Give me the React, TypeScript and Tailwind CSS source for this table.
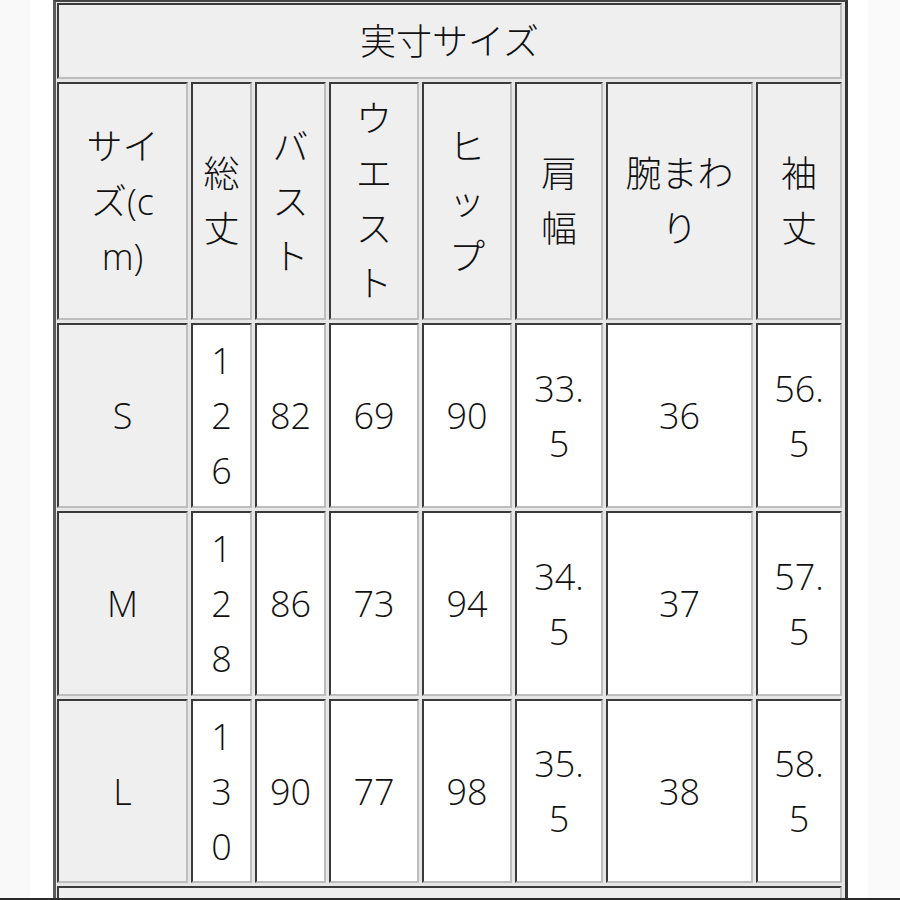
import React from "react";

const font = {
  fontFamily: '"Open Sans", "Noto Sans CJK JP", sans-serif',
};

type CellProps = { children?: React.ReactNode; gray?: boolean; className?: string };

function Cell({ children, gray, className = "" }: CellProps) {
  return (
    <div
      className={`flex items-center justify-center text-center text-[36px] font-light leading-[55px] text-[#111] border-t-2 border-l-2 border-t-[#3a3a3a] border-l-[#3a3a3a] border-r-2 border-b-2 border-r-[#bdbdbd] border-b-[#bdbdbd] ${
        gray ? "bg-[#efefef]" : "bg-white"
      } ${className}`}
    >
      <div>{children}</div>
    </div>
  );
}

const headers: React.ReactNode[] = [
  <>サイ<br />ズ(c<br />m)</>,
  <>総<br />丈</>,
  <>バ<br />ス<br />ト</>,
  <>ウ<br />エ<br />ス<br />ト</>,
  <>ヒ<br />ッ<br />プ</>,
  <>肩<br />幅</>,
  <>腕まわ<br />り</>,
  <>袖<br />丈</>,
];

const rows: string[][] = [
  ["S", "1\n2\n6", "82", "69", "90", "33.\n5", "36", "56.\n5"],
  ["M", "1\n2\n8", "86", "73", "94", "34.\n5", "37", "57.\n5"],
  ["L", "1\n3\n0", "90", "77", "98", "35.\n5", "38", "58.\n5"],
];

function lines(s: string) {
  const parts = s.split("\n");
  return parts.map((p, i) => (
    <React.Fragment key={i}>
      {p}
      {i < parts.length - 1 && <br />}
    </React.Fragment>
  ));
}

export default function App() {
  return (
    <div className="relative w-[900px] h-[900px] overflow-hidden bg-white" style={font}>
      <div className="absolute left-0 top-0 h-full w-[30px] bg-[#f9f9f9]" />
      <div className="absolute right-0 top-0 h-full w-[32px] bg-[#fafafa]" />
      <div className="relative ml-[53px] w-[795px] border-l-[3px] border-l-[#5a5a5a] border-r-[3px] border-r-[#333] border-t-2 border-t-[#444] bg-[#e6e6e6] pl-[1px] pr-[3px] pt-[1px]">
        <div className="grid grid-cols-[131px_61px_71px_90px_90px_88px_147px_86px] grid-rows-[76px_238px_185px_185px_184px_40px] gap-[3px]">
          <Cell gray className="col-span-8">実寸サイズ</Cell>
          {headers.map((h, i) => (
            <Cell key={i} gray>
              {h}
            </Cell>
          ))}
          {rows.map((r, ri) =>
            r.map((v, ci) => (
              <Cell key={`${ri}-${ci}`} gray={ci === 0}>
                {lines(v)}
              </Cell>
            ))
          )}
          <Cell gray className="col-span-8" />
        </div>
      </div>
      <div className="absolute left-0 bottom-0 w-full h-[2px] bg-[#2a2a2a]" />
    </div>
  );
}
